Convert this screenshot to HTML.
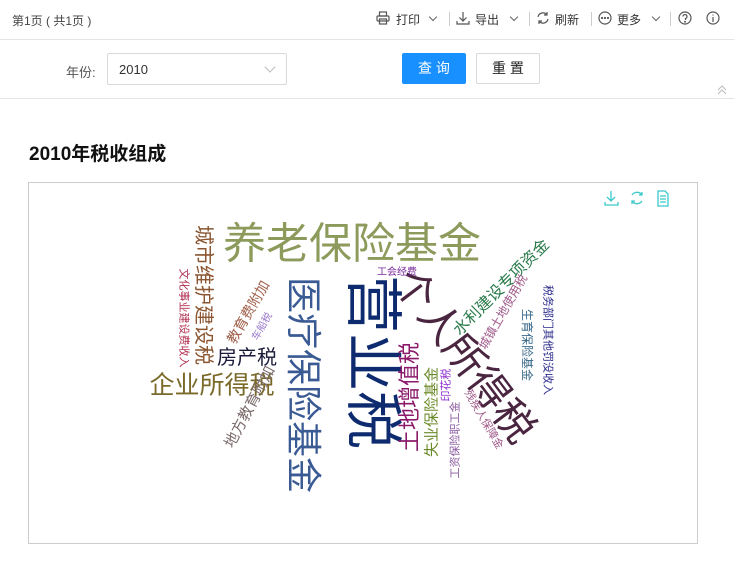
<!DOCTYPE html>
<html><head><meta charset="utf-8"><style>
body{margin:0;width:734px;height:576px;background:#fff;font-family:"Liberation Sans","Noto Sans CJK SC",sans-serif;position:relative;overflow:hidden;color:#333}
.a{position:absolute}
.w{position:absolute;white-space:nowrap;line-height:1;transform-origin:center}
.tb{font-size:12px;color:#333;top:11px}
.cv{position:absolute;top:14px;width:5px;height:5px;border-right:1.2px solid #666;border-bottom:1.2px solid #666;transform:rotate(45deg)}
</style></head><body>
<div class="a" style="left:12px;top:12px;font-size:12px;color:#444">第1页 ( 共1页 )</div>
<svg class="a" style="left:376px;top:11px" width="14" height="14" viewBox="0 0 14 14" fill="none" stroke="#555" stroke-width="1.2"><rect x="3.5" y="1" width="7" height="4"/><rect x="1" y="5" width="12" height="5" rx="1"/><rect x="3.5" y="8" width="7" height="5"/></svg>
<div class="a tb" style="left:396px">打印</div>
<div class="cv" style="left:430px"></div>
<div class="a" style="left:449px;top:12px;width:1px;height:14px;background:#ccc"></div>
<svg class="a" style="left:456px;top:11px" width="14" height="14" viewBox="0 0 14 14" fill="none" stroke="#555" stroke-width="1.2"><path d="M7 1v9M3.5 6.5L7 10l3.5-3.5M1 10v3h12v-3"/></svg>
<div class="a tb" style="left:475px">导出</div>
<div class="cv" style="left:511px"></div>
<div class="a" style="left:529px;top:12px;width:1px;height:14px;background:#ccc"></div>
<svg class="a" style="left:536px;top:11px" width="14" height="14" viewBox="0 0 14 14" fill="none" stroke="#555" stroke-width="1.2"><path d="M2 6a5 5 0 0 1 9-2M12 8a5 5 0 0 1-9 2M11 1v3H8M3 13v-3h3"/></svg>
<div class="a tb" style="left:555px">刷新</div>
<div class="a" style="left:591px;top:12px;width:1px;height:14px;background:#ccc"></div>
<svg class="a" style="left:598px;top:11px" width="14" height="14" viewBox="0 0 14 14" fill="none" stroke="#555" stroke-width="1.2"><circle cx="7" cy="7" r="6"/><circle cx="4" cy="7" r=".5" fill="#555"/><circle cx="7" cy="7" r=".5" fill="#555"/><circle cx="10" cy="7" r=".5" fill="#555"/></svg>
<div class="a tb" style="left:617px">更多</div>
<div class="cv" style="left:653px"></div>
<div class="a" style="left:670px;top:12px;width:1px;height:14px;background:#ccc"></div>
<svg class="a" style="left:678px;top:11px" width="14" height="14" viewBox="0 0 14 14" fill="none" stroke="#555" stroke-width="1.2"><circle cx="7" cy="7" r="6"/><path d="M5 5.5a2 2 0 1 1 2.5 2V9"/><circle cx="7" cy="10.8" r=".4"/></svg>
<svg class="a" style="left:706px;top:11px" width="14" height="14" viewBox="0 0 14 14" fill="none" stroke="#555" stroke-width="1.2"><circle cx="7" cy="7" r="6"/><path d="M7 6v5M7 3.5v1"/></svg>
<div class="a" style="left:0;top:39px;width:734px;height:1px;background:#e4e4e4"></div>
<div class="a" style="left:66px;top:62px;font-size:13px;color:#555">年份:</div>
<div class="a" style="left:107px;top:53px;width:178px;height:30px;border:1px solid #d9d9d9;border-radius:2px"></div>
<div class="a" style="left:119px;top:62px;font-size:13px;color:#333">2010</div>
<div class="a" style="left:266px;top:63px;width:7px;height:7px;border-right:1px solid #bbb;border-bottom:1px solid #bbb;transform:rotate(45deg)"></div>
<div class="a" style="left:402px;top:53px;width:64px;height:31px;background:#1890ff;border-radius:2px;color:#fff;font-size:14px;text-align:center;line-height:31px">查 询</div>
<div class="a" style="left:476px;top:53px;width:62px;height:29px;border:1px solid #d9d9d9;border-radius:2px;color:#222;font-size:14px;text-align:center;line-height:29px">重 置</div>
<svg class="a" style="left:716px;top:84px" width="12" height="12" viewBox="0 0 12 12" fill="none" stroke="#bbb" stroke-width="1"><path d="M2 6l4-4 4 4M2 10l4-4 4 4"/></svg>
<div class="a" style="left:0;top:98px;width:734px;height:1px;background:#e4e4e4"></div>
<div class="a" style="left:29px;top:139px;font-size:19px;font-weight:bold;color:#111">2010年税收组成</div>
<div class="a" style="left:28px;top:182px;width:668px;height:360px;border:1px solid #ccc"></div>
<svg class="a" style="left:603px;top:189px" width="70" height="18" viewBox="0 0 70 18" fill="none" stroke="#3cc8cc" stroke-width="1.3"><path d="M8 2v10M4 8l4 4 4-4M2 13v3h13v-3"/><path d="M29 6a6 6 0 0 1 10 0M39 3v3h-3M39 12a6 6 0 0 1-10 0M29 15v-3h3"/><path d="M55 2h7l3 3v12h-10zM57 7h6M57 10h6M57 13h6"/></svg>
<div class="w" style="left:352px;top:245px;transform:translate(-50%,-50%);font-size:43px;color:#8c9a5b">养老保险基金</div>
<div class="w" style="left:372px;top:362px;transform:translate(-50%,-50%) rotate(90deg);font-size:58px;color:#0d2b6e">营业税</div>
<div class="w" style="left:303px;top:385px;transform:translate(-50%,-50%) rotate(90deg);font-size:36px;color:#3a5a94">医疗保险基金</div>
<div class="w" style="left:464px;top:356px;transform:translate(-50%,-50%) rotate(53deg);font-size:41px;color:#4a2540">个人所得税</div>
<div class="w" style="left:410px;top:397px;transform:translate(-50%,-50%) rotate(-90deg);font-size:22px;color:#8b1a6b">土地增值税</div>
<div class="w" style="left:203px;top:295px;transform:translate(-50%,-50%) rotate(90deg);font-size:20px;color:#8a5530">城市维护建设税</div>
<div class="w" style="left:183px;top:318px;transform:translate(-50%,-50%) rotate(90deg);font-size:11px;color:#b03050">文化事业建设费收入</div>
<div class="w" style="left:212px;top:386px;transform:translate(-50%,-50%);font-size:25px;color:#7a6a2a">企业所得税</div>
<div class="w" style="left:247px;top:358px;transform:translate(-50%,-50%);font-size:20px;color:#1a1a3a">房产税</div>
<div class="w" style="left:248px;top:312px;transform:translate(-50%,-50%) rotate(-60deg);font-size:14px;color:#a0604a">教育费附加</div>
<div class="w" style="left:250px;top:407px;transform:translate(-50%,-50%) rotate(-62deg);font-size:15px;color:#7a6a6a">地方教育附加</div>
<div class="w" style="left:263px;top:327px;transform:translate(-50%,-50%) rotate(-60deg);font-size:10px;color:#9a7acc">车船税</div>
<div class="w" style="left:397px;top:273px;transform:translate(-50%,-50%);font-size:10px;color:#7a2a9a">工会经费</div>
<div class="w" style="left:502px;top:288px;transform:translate(-50%,-50%) rotate(-45deg);font-size:16px;color:#2a7a4a">水利建设专项资金</div>
<div class="w" style="left:503px;top:312px;transform:translate(-50%,-50%) rotate(-60deg);font-size:12px;color:#a05a8a">城镇土地使用税</div>
<div class="w" style="left:527px;top:345px;transform:translate(-50%,-50%) rotate(90deg);font-size:12px;color:#3a6a8a">生育保险基金</div>
<div class="w" style="left:547px;top:340px;transform:translate(-50%,-50%) rotate(90deg);font-size:11px;color:#2a2a8a">税务部门其他罚没收入</div>
<div class="w" style="left:432px;top:412px;transform:translate(-50%,-50%) rotate(-90deg);font-size:15px;color:#6a8a2a">失业保险基金</div>
<div class="w" style="left:447px;top:385px;transform:translate(-50%,-50%) rotate(-90deg);font-size:11px;color:#8a2acc">印花税</div>
<div class="w" style="left:456px;top:440px;transform:translate(-50%,-50%) rotate(-90deg);font-size:11px;color:#8a5aa0">工资保险职工金</div>
<div class="w" style="left:483px;top:420px;transform:translate(-50%,-50%) rotate(60deg);font-size:11px;color:#a05a8a">残疾人保障金</div>
</body></html>
